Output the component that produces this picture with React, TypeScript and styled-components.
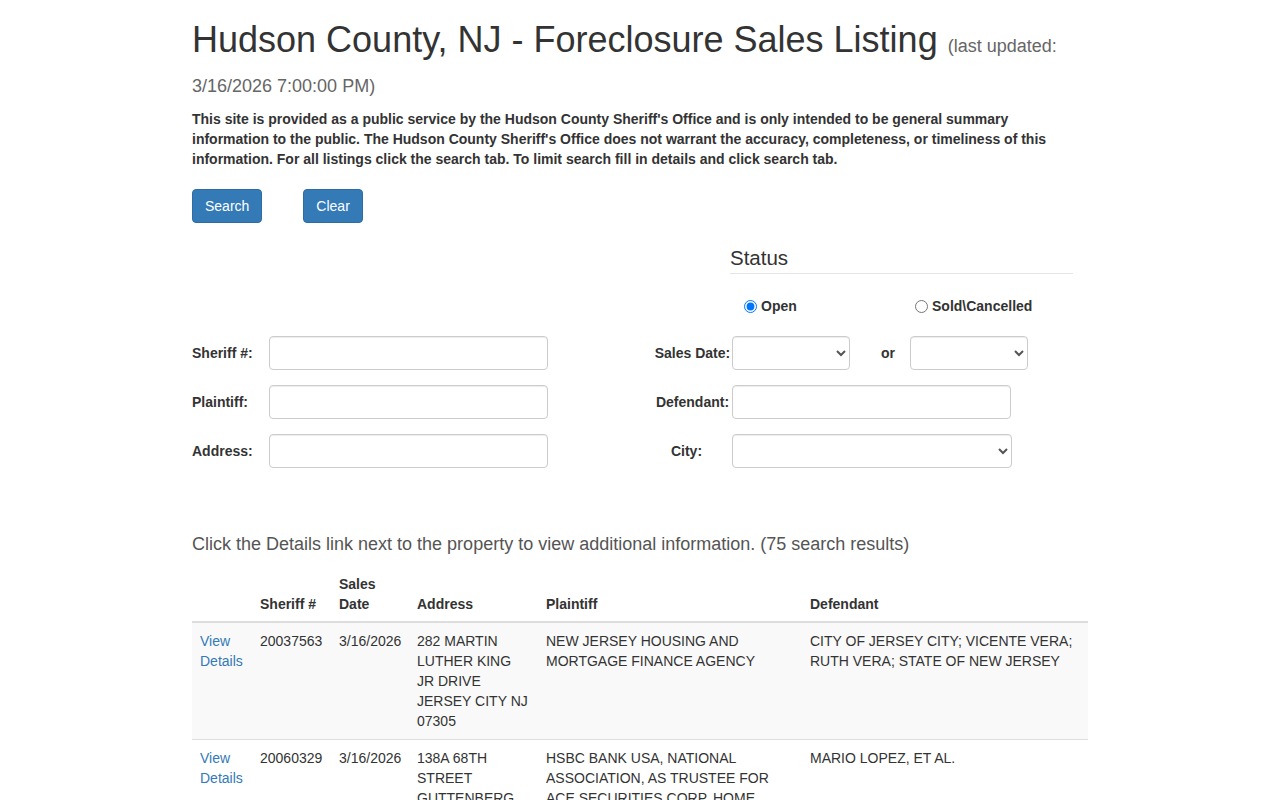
import styled, { createGlobalStyle } from "styled-components";

const GlobalStyle = createGlobalStyle`
  html, body {
    margin: 0;
    padding: 0;
    background: #ffffff;
  }
  body {
    font-family: "Liberation Sans", Arial, Helvetica, sans-serif;
    font-size: 14px;
    line-height: 20px;
    color: #333333;
  }
  * {
    box-sizing: border-box;
  }
`;

type Listing = {
  sheriff: string;
  date: string;
  address: string[];
  plaintiff: string;
  defendant: string;
};

const listings: Listing[] = [
  {
    sheriff: "20037563",
    date: "3/16/2026",
    address: ["282 MARTIN", "LUTHER KING", "JR DRIVE", "JERSEY CITY NJ", "07305"],
    plaintiff: "NEW JERSEY HOUSING AND MORTGAGE FINANCE AGENCY",
    defendant: "CITY OF JERSEY CITY; VICENTE VERA; RUTH VERA; STATE OF NEW JERSEY",
  },
  {
    sheriff: "20060329",
    date: "3/16/2026",
    address: ["138A 68TH", "STREET", "GUTTENBERG", "NJ 07093"],
    plaintiff:
      "HSBC BANK USA, NATIONAL ASSOCIATION, AS TRUSTEE FOR ACE SECURITIES CORP. HOME EQUITY LOAN TRUST, SERIES 2006-ASAP6",
    defendant: "MARIO LOPEZ, ET AL.",
  },
  {
    sheriff: "20061174",
    date: "3/16/2026",
    address: ["74 GRAND", "STREET", "JERSEY CITY NJ", "07302"],
    plaintiff: "U.S. BANK NATIONAL ASSOCIATION",
    defendant: "JOHN SMITH, ET AL.",
  },
];

const Page = styled.div`
  width: 896px;
  margin: 0 auto;
  padding-bottom: 40px;
`;

const Title = styled.h1`
  margin: 20px 0 0;
  font-size: 36px;
  font-weight: 500;
  line-height: 40px;
  color: #333333;
`;

const Updated = styled.small`
  font-size: 18px;
  line-height: 1;
  color: #666666;
`;

const Notice = styled.p`
  margin: 9px 0 0;
  max-width: 860px;
  font-size: 14px;
  font-weight: 700;
  line-height: 20px;
`;

const ButtonRow = styled.div`
  display: flex;
  gap: 41px;
  margin-top: 20px;
`;

const Button = styled.button`
  height: 34px;
  padding: 6px 12px;
  font-family: inherit;
  font-size: 14px;
  line-height: 20px;
  color: #ffffff;
  background: #337ab7;
  border: 1px solid #2e6da4;
  border-radius: 4px;
`;

const StatusBlock = styled.div`
  margin: 24px 0 0 538px;
  width: 343px;
`;

const StatusHeading = styled.h3`
  margin: 0;
  padding-bottom: 4px;
  font-size: 20.5px;
  font-weight: 500;
  line-height: 22px;
  border-bottom: 1px solid #e5e5e5;
`;

const RadioRow = styled.div`
  display: grid;
  grid-template-columns: 171px auto;
  margin-top: 22px;
  padding-left: 14px;
`;

const RadioLabel = styled.label`
  display: flex;
  align-items: center;
  gap: 4px;
  font-size: 14px;
  font-weight: 700;

  input {
    margin: 0;
    width: 13px;
    height: 13px;
  }
`;

const FormGrid = styled.div`
  display: grid;
  grid-template-columns: 77px 279px 105px 79px auto;
  grid-auto-rows: 34px;
  row-gap: 15px;
  align-items: center;
  margin-top: 20px;
`;

const FieldLabel = styled.label<{ $center?: boolean; $padRight?: number }>`
  padding-right: ${(p) => p.$padRight ?? 0}px;
  font-size: 14px;
  font-weight: 700;
  text-align: ${(p) => (p.$center ? "center" : "left")};
  white-space: nowrap;
`;

const TextInput = styled.input<{ $width?: number }>`
  width: ${(p) => p.$width ?? 279}px;
  height: 34px;
  padding: 6px 12px;
  font-family: inherit;
  font-size: 14px;
  border: 1px solid #cccccc;
  border-radius: 4px;
  box-shadow: inset 0 1px 1px rgba(0, 0, 0, 0.075);
  background: #ffffff;
`;

const Select = styled.select<{ $width: number }>`
  width: ${(p) => p.$width}px;
  height: 34px;
  padding: 6px 8px;
  font-family: inherit;
  font-size: 14px;
  color: #555555;
  border: 1px solid #cccccc;
  border-radius: 4px;
  box-shadow: inset 0 1px 1px rgba(0, 0, 0, 0.075);
  background: #ffffff;
`;

const DateRange = styled.div`
  display: flex;
  align-items: center;
`;

const Or = styled.span`
  width: 60px;
  padding-left: 31px;
  font-size: 14px;
  font-weight: 700;
`;

const Spacer = styled.div``;

const ResultsNote = styled.h4`
  margin: 63px 0 0;
  font-size: 18px;
  font-weight: 400;
  line-height: 26px;
  color: #555555;
`;

const Table = styled.table`
  width: 896px;
  margin-top: 9px;
  border-collapse: collapse;
  border-spacing: 0;
  table-layout: fixed;
`;

const HeadCell = styled.th`
  padding: 8px 8px 7px;
  text-align: left;
  vertical-align: bottom;
  font-weight: 700;
  border-bottom: 2px solid #dddddd;
`;

const Row = styled.tr`
  &:nth-child(odd) {
    background: #f9f9f9;
  }
`;

const Cell = styled.td`
  padding: 8px;
  vertical-align: top;
  border-top: 1px solid #dddddd;
`;

const DetailsLink = styled.a`
  color: #337ab7;
  text-decoration: none;
`;

export default function App() {
  return (
    <>
      <GlobalStyle />
      <Page>
        <Title>
          Hudson County, NJ - Foreclosure Sales Listing{" "}
          <Updated>(last updated: 3/16/2026 7:00:00 PM)</Updated>
        </Title>
        <Notice>
          This site is provided as a public service by the Hudson County Sheriff's Office and is
          only intended to be general summary information to the public. The Hudson County
          Sheriff's Office does not warrant the accuracy, completeness, or timeliness of this
          information. For all listings click the search tab. To limit search fill in details and
          click search tab.
        </Notice>
        <ButtonRow>
          <Button>Search</Button>
          <Button>Clear</Button>
        </ButtonRow>

        <StatusBlock>
          <StatusHeading>Status</StatusHeading>
          <RadioRow>
            <RadioLabel>
              <input type="radio" name="status" defaultChecked />
              Open
            </RadioLabel>
            <RadioLabel>
              <input type="radio" name="status" />
              Sold\Cancelled
            </RadioLabel>
          </RadioRow>
        </StatusBlock>

        <FormGrid>
          <FieldLabel>Sheriff #:</FieldLabel>
          <TextInput />
          <Spacer />
          <FieldLabel $center>Sales Date:</FieldLabel>
          <DateRange>
            <Select $width={118}>
              <option></option>
            </Select>
            <Or>or</Or>
            <Select $width={118}>
              <option></option>
            </Select>
          </DateRange>

          <FieldLabel>Plaintiff:</FieldLabel>
          <TextInput />
          <Spacer />
          <FieldLabel $center>Defendant:</FieldLabel>
          <TextInput />

          <FieldLabel>Address:</FieldLabel>
          <TextInput />
          <Spacer />
          <FieldLabel $center $padRight={12}>
            City:
          </FieldLabel>
          <Select $width={280}>
            <option></option>
          </Select>
        </FormGrid>

        <ResultsNote>
          Click the Details link next to the property to view additional information. (75 search
          results)
        </ResultsNote>

        <Table>
          <colgroup>
            <col style={{ width: 60 }} />
            <col style={{ width: 79 }} />
            <col style={{ width: 78 }} />
            <col style={{ width: 129 }} />
            <col style={{ width: 264 }} />
            <col />
          </colgroup>
          <thead>
            <tr>
              <HeadCell></HeadCell>
              <HeadCell>Sheriff #</HeadCell>
              <HeadCell>Sales Date</HeadCell>
              <HeadCell>Address</HeadCell>
              <HeadCell>Plaintiff</HeadCell>
              <HeadCell>Defendant</HeadCell>
            </tr>
          </thead>
          <tbody>
            {listings.map((item) => (
              <Row key={item.sheriff}>
                <Cell>
                  <DetailsLink href="#">View Details</DetailsLink>
                </Cell>
                <Cell>{item.sheriff}</Cell>
                <Cell>{item.date}</Cell>
                <Cell>
                  {item.address.map((line) => (
                    <span key={line}>
                      {line}
                      <br />
                    </span>
                  ))}
                </Cell>
                <Cell>{item.plaintiff}</Cell>
                <Cell>{item.defendant}</Cell>
              </Row>
            ))}
          </tbody>
        </Table>
      </Page>
    </>
  );
}
